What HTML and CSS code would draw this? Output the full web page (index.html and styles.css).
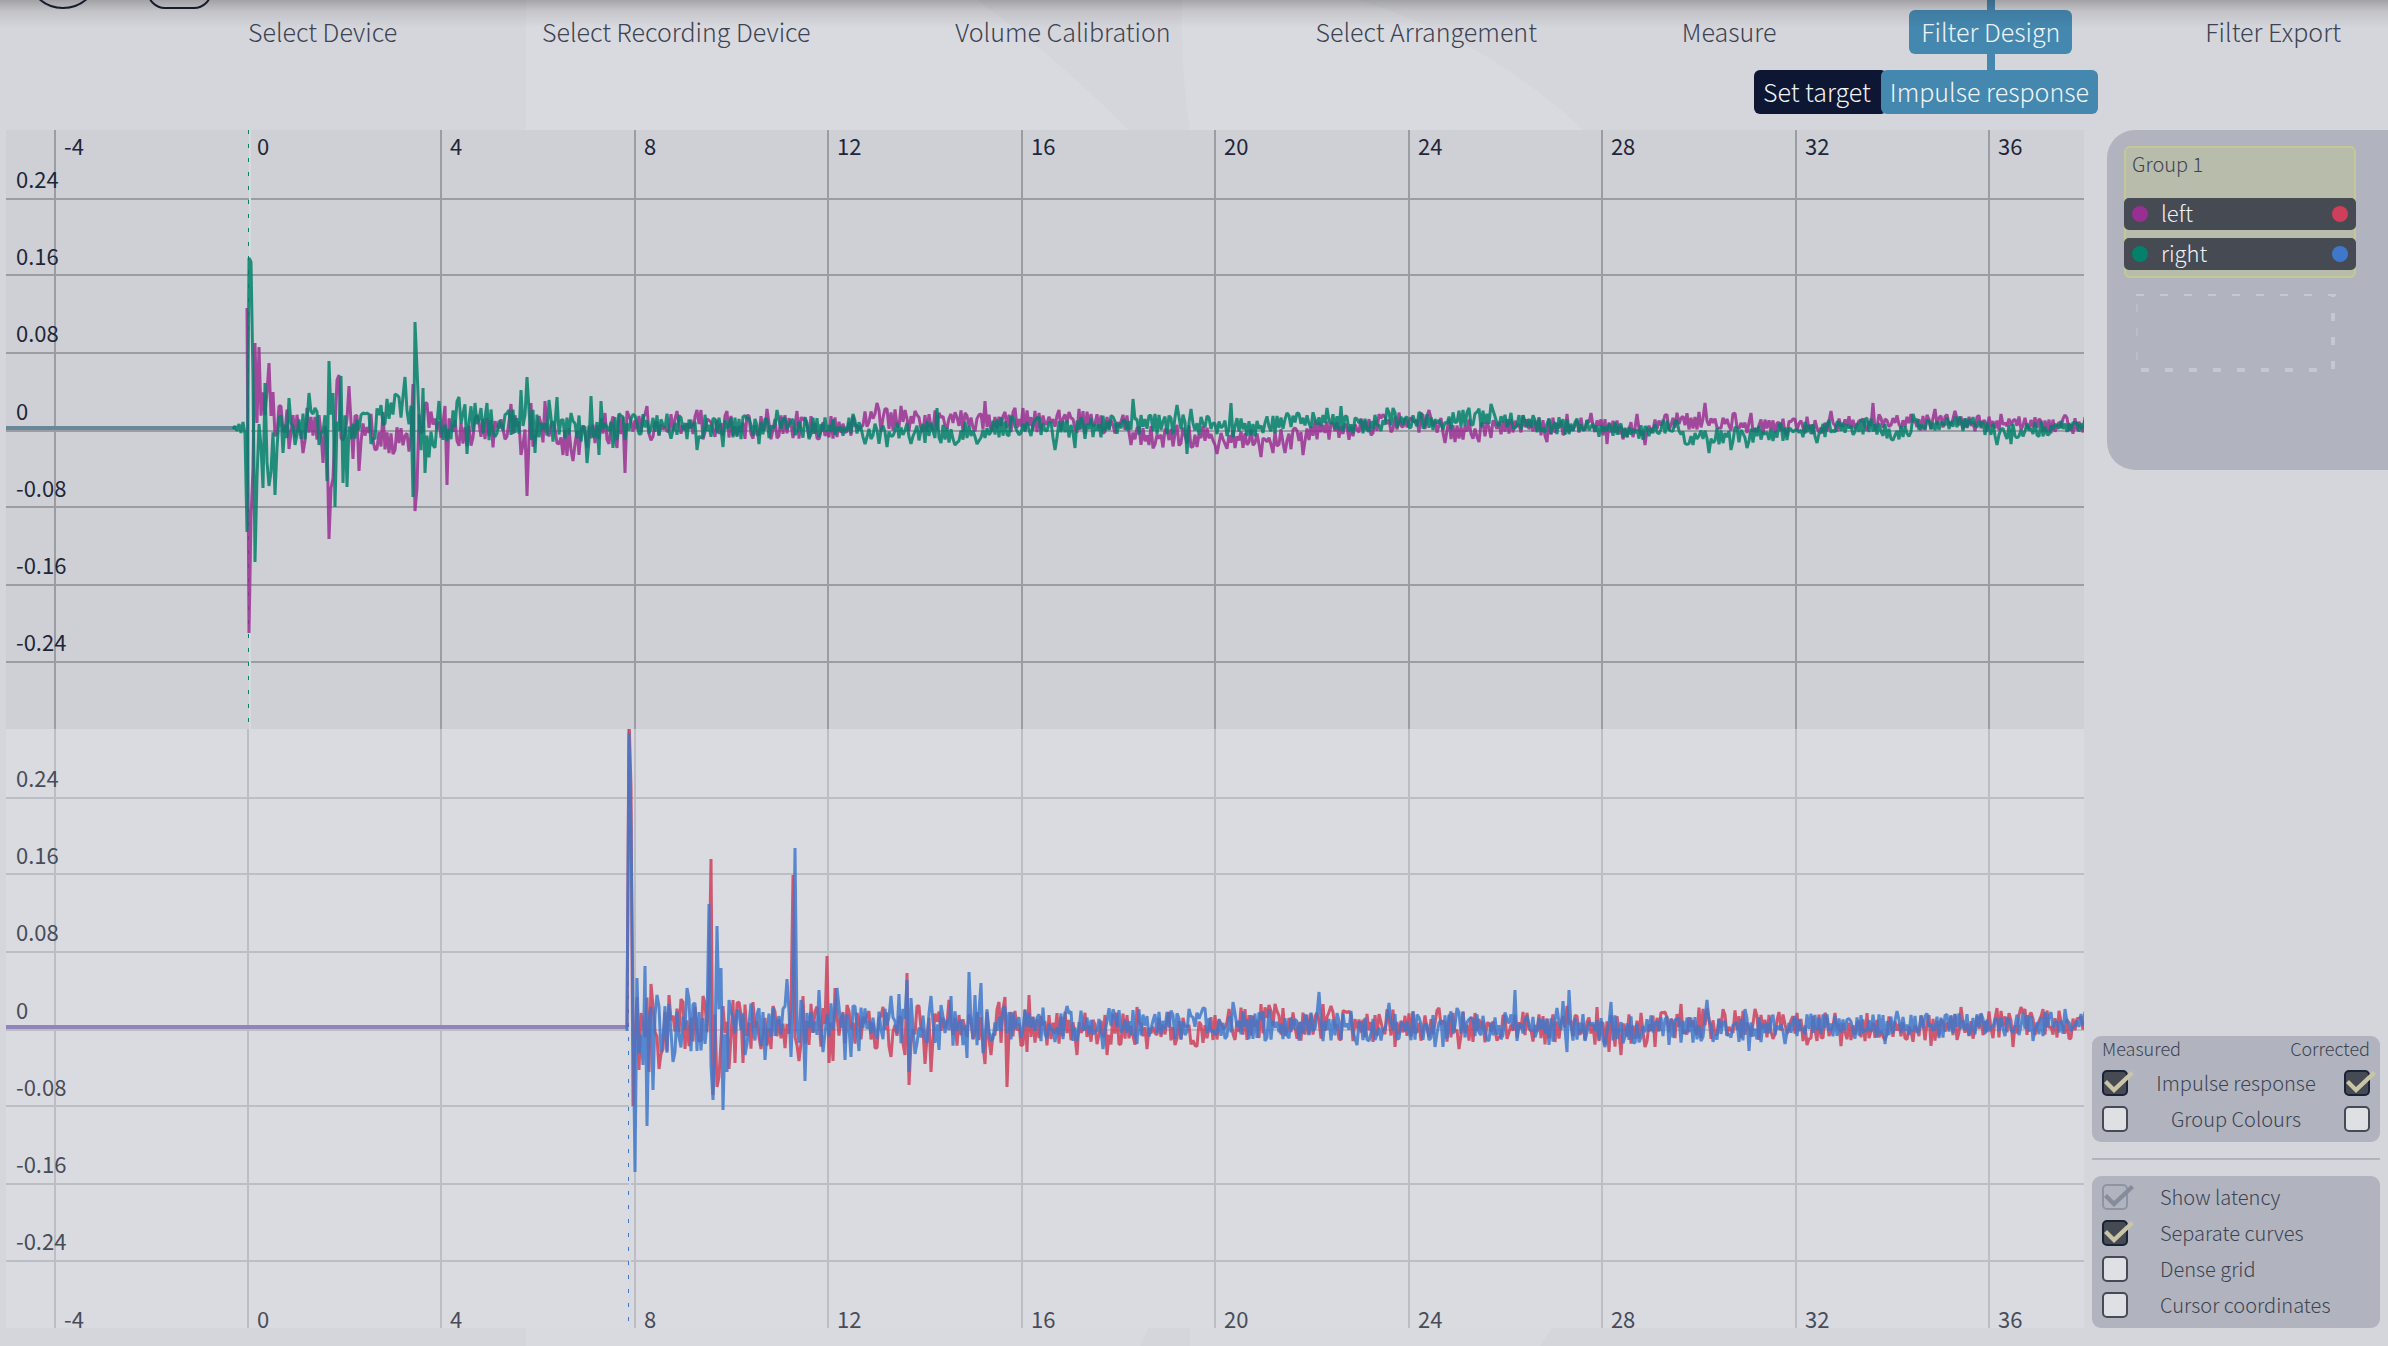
FILE: index.html
```html
<!DOCTYPE html>
<html lang="en">
<head>
<meta charset="utf-8">
<title>Filter Design – Impulse response</title>
<link rel="stylesheet" href="styles.css">
</head>
<body>
<svg class="backdrop" viewBox="0 0 2388 1346" preserveAspectRatio="none" aria-hidden="true">
  <path d="M526 0H977Q1062 62 1128 130Q1420 760 1140 1346H526Z"/>
  <path d="M1182 0Q1180 66 1190 130V1346H1540Q1960 720 1583 130Q1488 40 1358 0Z"/>
</svg>

<header class="header">
  <div class="toolbar">
    <button class="tool" type="button" aria-label="Home"><svg width="56" height="10" viewBox="0 0 56 10"><circle cx="28" cy="-28" r="36"/></svg></button>
    <button class="tool" type="button" aria-label="Menu"><svg width="66" height="10" viewBox="0 0 66 10"><rect x="1" y="-40" width="63" height="48" rx="17"/></svg></button>
  </div>
  <nav class="steps" aria-label="Steps">
    <a class="step" href="#device">Select Device</a>
    <a class="step" href="#recording">Select Recording Device</a>
    <a class="step" href="#volume">Volume Calibration</a>
    <a class="step" href="#arrangement">Select Arrangement</a>
    <a class="step" href="#measure">Measure</a>
    <a class="step step-active" href="#design" aria-current="step">Filter Design</a>
    <a class="step" href="#export">Filter Export</a>
  </nav>
  <nav class="substeps" aria-label="Filter design">
    <a class="substep" href="#target">Set target</a>
    <a class="substep substep-active" href="#impulse" aria-current="page">Impulse response</a>
  </nav>
</header>

<main class="main">
  <div class="charts">
    <section class="chart chart-measured" id="measured" aria-label="Measured impulse response"></section>
    <section class="chart chart-corrected" id="corrected" aria-label="Corrected impulse response"></section>
  </div>

  <aside class="side">
    <section class="groups">
      <div class="group">
        <h2 class="group-name">Group 1</h2>
        <ul class="channels">
          <li class="channel"><span class="dot dot-magenta"></span><span class="channel-name">left</span><span class="dot dot-red"></span></li>
          <li class="channel"><span class="dot dot-green"></span><span class="channel-name">right</span><span class="dot dot-blue"></span></li>
        </ul>
      </div>
      <svg class="dropzone" width="200" height="78" viewBox="0 0 200 78" aria-hidden="true">
        <path d="M0 1H200" stroke-width="2" stroke-dasharray="8 16"/>
        <path d="M1 10V78" stroke-width="1" stroke-dasharray="8 16"/>
        <path d="M197 0V3M197 19V78" stroke-width="4" stroke-dasharray="8 16"/>
        <path d="M5 76H190" stroke-width="4" stroke-dasharray="8 16"/>
      </svg>
    </section>

    <div class="options">
      <form class="panel">
        <div class="heads"><span>Measured</span><span>Corrected</span></div>
        <div class="pair">
          <input class="tick" type="checkbox" id="ir-measured" checked aria-label="Measured impulse response">
          <label for="ir-measured">Impulse response</label>
          <input class="tick" type="checkbox" id="ir-corrected" checked aria-label="Corrected impulse response">
        </div>
        <div class="pair">
          <input class="tick" type="checkbox" id="gc-measured" aria-label="Measured group colours">
          <label for="gc-measured">Group Colours</label>
          <input class="tick" type="checkbox" id="gc-corrected" aria-label="Corrected group colours">
        </div>
      </form>
      <hr class="rule">
      <form class="panel panel-view">
        <div class="option"><input class="tick" type="checkbox" id="latency" checked disabled><label for="latency">Show latency</label></div>
        <div class="option"><input class="tick" type="checkbox" id="separate" checked><label for="separate">Separate curves</label></div>
        <div class="option"><input class="tick" type="checkbox" id="dense"><label for="dense">Dense grid</label></div>
        <div class="option"><input class="tick" type="checkbox" id="cursor"><label for="cursor">Cursor coordinates</label></div>
      </form>
    </div>
  </aside>
</main>
<script src="charts.js"></script>
</body>
</html>
```
FILE: styles.css
```css
* { box-sizing: border-box; }

body {
  margin: 0;
  min-height: 100vh;
  display: flex;
  flex-direction: column;
  overflow-x: hidden;
  background: #d5d6db;
  color: #3c4353;
  font-family: "Noto Sans CJK SC", "Noto Sans", sans-serif;
  font-weight: 300;
  font-size: 22px;
}

a { color: inherit; text-decoration: none; }

.backdrop {
  position: absolute;
  z-index: -1;
  inset: 0;
  width: 100%;
  height: 100%;
  fill: #d9dadf;
}

/* Header */
.header { position: relative; padding-bottom: 16px; }

.header::after {
  content: "";
  position: absolute;
  z-index: 2;
  inset: 0 0 auto;
  height: 28px;
  background: linear-gradient(rgba(30, 26, 30, 0.28), rgba(30, 26, 30, 0.1) 40%, rgba(30, 26, 30, 0));
  pointer-events: none;
}

.toolbar {
  display: flex;
  gap: 56px;
  height: 10px;
  padding-left: 35px;
  overflow: hidden;
}

.tool { display: block; padding: 0; border: 0; background: none; }
.tool svg { display: block; fill: none; stroke: #141d30; stroke-width: 2; }

.steps,
.substeps {
  display: flex;
  font-size: 25px;
  line-height: 42px;
  white-space: nowrap;
}

.steps {
  justify-content: space-between;
  padding: 0 35px 0 236px;
}

.step { position: relative; padding: 0 12px 2px; border-radius: 6px; }
.step-active { background: #4487af; color: #f0f4f8; }

.step-active::before,
.step-active::after {
  content: "";
  position: absolute;
  left: calc(50% - 4px);
  width: 8px;
  background: #4487af;
}

.step-active::before { bottom: 100%; height: 10px; }
.step-active::after { top: 100%; height: 16px; }

.substeps {
  justify-content: flex-end;
  margin-top: 16px;
  padding-right: 290px;
}

.substep { padding: 0 16px 2px 9px; border-radius: 6px; background: #0d1733; color: #f0f4f8; }
.substep-active { margin-left: -6px; padding: 0 9px 2px; background: #4487af; }

/* Layout */
.main {
  flex: 1;
  display: grid;
  grid-template-columns: 1fr 296px;
  gap: 8px;
  padding: 0 0 18px 6px;
}

.charts { display: grid; grid-template-rows: 1fr 1fr; }

/* Charts */
.chart { position: relative; overflow: hidden; font-weight: 400; line-height: 24px; }
.chart-measured { background: #cfd0d5; color: #1e2639; }
.chart-corrected { background: #dadbe0; color: #474c59; }

.plot { position: absolute; inset: 0; width: 100%; height: 100%; fill: none; }
.plot path { vector-effect: non-scaling-stroke; stroke-width: 2; stroke-linejoin: bevel; }
.chart-measured .grid { stroke: #9c9da3; }
.chart-corrected .grid { stroke: #bdbec4; }
.plot .curve { stroke-width: 3; stroke-opacity: 0.85; }
.plot .halo { stroke: #d8d9de; }
.plot .marker { stroke-width: 1; stroke-dasharray: 4 10; }
.plot .silence { stroke-width: 4; }
.magenta { stroke: #992f92; }
.green { stroke: #04806b; }
.red { stroke: #cd3f5a; }
.blue { stroke: #3f78ca; }
.measured-silence { stroke: #6a869a; }
.corrected-silence { stroke: #9185bb; }

.tag { position: absolute; margin: 0; }
.tag-y { left: 10px; transform: translateY(-50%); }
.tag-x { margin-left: 9px; }
.chart-measured .tag-x { top: 3px; }
.chart-corrected .tag-x { bottom: -1px; line-height: 22px; }

/* Side column */
.side {
  display: flex;
  flex-direction: column;
  justify-content: space-between;
  gap: 24px;
}

.groups {
  min-height: 340px;
  margin-left: 15px;
  padding: 16px 32px 16px 17px;
  border-radius: 28px 0 0 28px;
  background: #b1b4be;
}

.group {
  padding: 0 0 6px;
  border: 2px solid #c5c894;
  border-radius: 6px;
  background: #b8bdab;
}

.group-name { margin: 0; padding: 2px 6px 20px; font-size: 20px; font-weight: 300; line-height: 28px; }

.channels {
  display: flex;
  flex-direction: column;
  gap: 8px;
  margin: 0 -2px;
  padding: 0;
  list-style: none;
}

.channel {
  display: flex;
  align-items: center;
  gap: 13px;
  height: 32px;
  padding: 0 8px;
  border-radius: 5px;
  background: #464a52;
  color: #f0f1f4;
}

.channel-name { flex: 1; padding-bottom: 4px; line-height: 28px; }
.dot { width: 16px; height: 16px; border-radius: 50%; }
.dot-magenta { background: #992f92; }
.dot-green { background: #04806b; }
.dot-red { background: #cd3f5a; }
.dot-blue { background: #3f78ca; }
.dropzone { display: block; margin: 16px 0 0 12px; fill: none; stroke: #c5c8d0; }

.options { padding-right: 8px; }
.panel { padding: 0 10px 5px; border-radius: 9px; background: #b1b4be; font-size: 20px; }
.panel-view { padding-top: 3px; }
.heads { display: flex; justify-content: space-between; padding-bottom: 5px; font-size: 18px; line-height: 24px; }
.pair { display: flex; align-items: center; justify-content: space-between; height: 36px; }
.option { display: flex; align-items: center; gap: 32px; height: 36px; }
.pair label,
.option label { padding-bottom: 2px; }
.rule { height: 2px; margin: 16px 0; border: 0; background: #b1b4be; }

.tick {
  appearance: none;
  position: relative;
  flex: none;
  width: 26px;
  height: 26px;
  margin: 0;
  border: 2px solid #454a56;
  border-radius: 5px;
  background: #dfe0e4;
}

.tick:checked { border-color: #1a2235; background: #464a52; }
.tick:checked::after {
  content: "";
  position: absolute;
  top: -2px;
  left: -2px;
  width: 34px;
  height: 26px;
  background: #cbc5a8;
  clip-path: path("M2 13L5 10L12 17L29 1L32 4L12 23Z");
}

.tick:disabled { border-color: #8f94a2; background: transparent; }
.tick:disabled::after { background: #868c9b; }
```
FILE: charts.js
```js
// Plot space is 2078 x 599 units; time 0 sits at ORIGIN, one millisecond is MS wide.
const WIDTH = 2078;
const HEIGHT = 599;
const ORIGIN = 242;
const MS = 48.36;
const ZERO = 298;
const ROWS = [69, 145, 223, 301, 377, 455, 532];
const LEVELS = ["0.24", "0.16", "0.08", "0", "-0.08", "-0.16", "-0.24"];
const TIMES = [-4, 0, 4, 8, 12, 16, 20, 24, 28, 32, 36];

function random(seed) {
  return () => {
    seed = (seed * 1664525 + 1013904223) >>> 0;
    return seed / 4294967296;
  };
}

function lerp(stops, x) {
  if (x <= stops[0][0]) return stops[0][1];
  for (let i = 1; i < stops.length; i++) {
    const [x0, y0] = stops[i - 1];
    const [x1, y1] = stops[i];
    if (x <= x1) return y0 + (y1 - y0) * (x - x0) / (x1 - x0);
  }
  return stops[stops.length - 1][1];
}

// A reverberant tail (noise swinging round a drifting mean) with the strong reflections laid over it.
function trace({ start, seed, amp, mean, peaks }) {
  const next = random(seed);
  const samples = new Map();
  let side = 1;
  for (let x = start; x <= WIDTH + 6; x += 2) {
    if (next() < 0.75) side = -side;
    samples.set(x, lerp(mean, x) + side * (0.1 + 1.25 * next()) * lerp(amp, x));
  }
  for (let i = 0; i < peaks.length; i += 2) {
    const x = start + 2 * Math.round((peaks[i] - 6 - start) / 2);
    samples.set(x, peaks[i + 1]);
  }
  return "M" + [...samples].sort((a, b) => a[0] - b[0])
    .map(([x, v]) => x + " " + (ZERO - v).toFixed(1)).join("L");
}

const magenta = {
  start: 241, seed: 11,
  amp: [[241, 3], [250, 16], [400, 13], [620, 11], [720, 9], [1100, 9], [1300, 8], [2078, 6]],
  mean: [[241, 0], [252, 30], [266, 15], [280, 0], [360, 0], [385, -15], [400, -10], [420, 12], [440, -2], [540, -4], [566, -17], [580, -6], [620, 0],
    [840, 1], [860, 8], [1090, 6], [1120, 2], [1140, -9], [1200, -8], [1260, -13], [1290, -10], [1310, -2], [1350, -1], [1384, 6], [1420, 5], [1450, -2], [1480, -1],
    [1500, 3], [1590, 1], [1630, -3], [1660, 7], [1720, 8], [1750, 0], [1830, 4], [1880, 7], [1990, 4], [2078, 2]],
  peaks: [247, 120, 249, -205, 251, -90, 253, -40, 255, 85, 257, 5, 259, 81, 268, 65, 272, 36, 279, 22, 288, -21, 302, -25, 323, -35, 329, -111, 331, -60, 333, -50, 336, 48,
    339, 53, 348, 42, 352, -31, 359, -43, 374, -22, 383, 16, 395, -22, 412, 44, 414, -83, 417, -60, 427, 25, 445, 22, 447, -57, 510, 24, 521, -27,
    527, -68, 531, 25, 545, 27, 562, -27, 573, -33, 605, 15, 617, -20, 625, -45, 627, 17, 646, 22, 677, 17, 697, 18, 701, 18, 727, 17, 767, 19, 797, 17,
    877, 25, 901, 22, 985, 27, 1015, 20, 1023, 20, 1078, 19, 1131, -17, 1149, -17, 1180, -15, 1216, -26, 1235, -20, 1261, -29, 1272, -25, 1284, -25,
    1302, -27, 1428, 18, 1445, -15, 1455, -14, 1479, -14, 1547, -14, 1567, 14, 1591, 15, 1606, -16, 1636, 14, 1645, -17, 1664, 13, 1705, 25,
    1751, 15, 1831, 17, 1873, 25, 1934, 19, 1955, 17, 2000, 14, 2064, 13]
};

const green = {
  start: 227, seed: 29,
  amp: [[227, 2], [241, 7], [250, 22], [280, 13], [400, 13], [560, 13], [640, 10], [720, 9], [1200, 8], [1400, 7], [2078, 6]],
  mean: [[227, 0], [244, 0], [250, -20], [268, -25], [276, 0], [366, 0], [386, 25], [404, 10], [420, -14], [434, -5], [450, 10], [490, 4], [640, 2],
    [840, 0], [860, -5], [980, -4], [1000, 3], [1080, 0], [1120, 3], [1170, 4], [1250, -1], [1275, 6], [1310, 7], [1360, 0], [1384, 10],
    [1440, 5], [1465, 11], [1520, 5], [1570, 1], [1640, -4], [1670, 3], [1680, -10], [1720, -8], [1780, -4], [1860, 2], [1890, -5], [1910, 2], [1970, 5], [1990, -5], [2020, -2], [2078, 3]],
  peaks: [233, -1, 235, 2, 237, -3, 239, 4, 241, -5, 243, 6, 245, -6, 247, -104, 249, 170, 251, 166, 253, 50, 255, -134, 257, -50, 262, -60, 265, 45, 268, -58, 274, -67, 282, -25, 289, 30, 309, 35,
    315, 20, 326, -53, 328, 67, 332, 35, 334, -79, 340, 52, 343, -55, 346, -59, 362, 15, 397, 33, 405, 51, 412, -69, 414, 106, 417, 60,
    422, 40, 425, -45, 439, 27, 458, 31, 466, -26, 475, 25, 487, 25, 521, 38, 527, 51, 535, -25, 549, 28, 557, 31, 571, 15, 587, -35, 590, 32,
    599, -27, 601, 27, 612, -20, 697, -22, 722, -19, 758, -16, 776, 18, 852, 14, 864, -16, 886, -19, 937, 20, 955, -17, 977, -16, 1055, -22, 1074, -20,
    1133, 29, 1155, 14, 1177, 23, 1186, -26, 1190, 19, 1231, 25, 1287, 15, 1327, 20, 1341, 22, 1387, 20, 1393, 20, 1468, 20, 1491, 24,
    1692, -17, 1708, -25, 1730, -22, 1747, -20, 1817, -15, 1913, 14, 1997, -17, 2010, -16]
};

const red = {
  start: 621, seed: 47,
  amp: [[621, 1], [624, 22], [780, 17], [1000, 15], [1100, 13], [1560, 12], [2078, 10]],
  mean: [[621, 0], [680, 2], [900, 0], [1100, 0], [1195, -6], [1220, 3], [1500, 0], [1608, -4], [1690, 4], [1780, 0], [1960, -1], [2020, 6], [2078, 0]],
  peaks: [627, 0, 629, 310, 631, 240, 633, -79, 637, 30, 639, -43, 649, -45, 651, 43, 658, -42, 668, 32, 682, 25, 684, -22, 703, 31, 709, 40, 711, 168, 713, -68, 717, -60, 719, -50,
    729, -42, 733, 27, 735, -36, 739, 25, 742, -36, 753, 25, 761, -22, 773, 21, 793, 152, 795, -10, 798, -34, 803, 31, 827, 71, 829, -36, 832, -34,
    835, 39, 847, 22, 890, -30, 904, -28, 906, 54, 909, -58, 919, 21, 925, -37, 930, -45, 949, 27, 985, -37, 991, -28, 998, 25, 1005, 30, 1007, -60,
    1011, 15, 1026, -25, 1028, 32, 1077, -28, 1107, -28, 1136, 20, 1147, -22, 1169, 15, 1175, -18, 1261, 23, 1268, 22, 1275, 23, 1323, 23, 1331, 21,
    1395, -20, 1438, 19, 1458, -22, 1567, 21, 1597, 20, 1608, -25, 1621, -28, 1644, -20, 1654, -20, 1664, 15, 1681, 23, 1755, 18, 1807, -18,
    1835, 14, 1841, -19, 1931, -19, 1961, 20, 1996, 19, 2013, -20, 2020, 20, 2024, 18]
};

const blue = {
  start: 621, seed: 83,
  amp: [[621, 1], [624, 22], [780, 16], [1000, 14], [1100, 12], [1560, 11], [2078, 9]],
  mean: [[621, 0], [680, 0], [900, 4], [930, 0], [1180, 4], [1240, 2], [1500, 0], [1740, -4], [1780, 0], [2000, 2], [2078, 4]],
  peaks: [627, -4, 629, 294, 631, 200, 633, 12, 635, -145, 637, 49, 643, -38, 645, 61, 647, -99, 651, 20, 653, -63, 657, 32, 661, -25, 669, 23, 673, -35, 686, 39, 689, 28,
    695, 24, 697, -24, 709, 123, 711, -39, 713, -73, 716, 101, 721, 59, 723, -83, 727, -45, 729, 27, 737, 17, 745, -28, 765, -33, 786, 48, 791, -30,
    795, 179, 797, 0, 800, 27, 805, -54, 807, 14, 819, 37, 822, -25, 836, 39, 844, -33, 850, -30, 853, 21, 859, -24, 890, 31, 899, 33, 907, 47, 909, -45,
    911, 29, 914, -27, 930, 31, 939, -23, 941, 22, 951, 31, 967, -31, 969, 55, 975, 32, 981, 44, 983, -26, 1067, 21, 1103, -22, 1137, -17, 1203, 19,
    1232, 25, 1265, -14, 1318, 35, 1356, -18, 1388, 24, 1435, -20, 1442, -20, 1457, 19, 1514, 37, 1549, -18, 1557, 19, 1562, 26, 1566, -25,
    1568, 37, 1605, -20, 1611, 25, 1669, -18, 1707, 27, 1744, 18, 1748, -24, 1784, -17, 1885, -17, 1897, 16, 2032, -14, 2065, 18]
};

function draw(id, { curves, marker, markerClass, silence, silenceEnd }) {
  const chart = document.getElementById(id);
  const columns = TIMES.map(t => Math.round(ORIGIN + t * MS));
  const grid = columns.filter(x => Math.abs(x - marker) > 2).map(x => `M${x} 0V${HEIGHT}`)
    .concat(ROWS.map(y => `M0 ${y}H${WIDTH}`)).join("");
  const lines = curves.map(([name, data]) => `<path class="${name} curve" d="${trace(data)}"/>`).join("");
  const tagsY = LEVELS.map((text, i) =>
    `<p class="tag tag-y" style="top:${(100 * (48 + i * 77.2) / HEIGHT).toFixed(2)}%">${text}</p>`).join("");
  const tagsX = TIMES.map((t, i) =>
    `<p class="tag tag-x" style="left:${(100 * columns[i] / WIDTH).toFixed(2)}%">${t}</p>`).join("");
  chart.innerHTML = `<svg class="plot" viewBox="0 0 ${WIDTH} ${HEIGHT}" preserveAspectRatio="none" aria-hidden="true">
    <path class="grid" d="${grid}"/>
    <path class="halo" d="M${marker + 1} 0V${HEIGHT}"/>
    <path class="${silence} silence" d="M0 ${ZERO}H${silenceEnd}"/>
    <path class="${markerClass} marker" d="M${marker - 0.5} 0V${HEIGHT}"/>
    ${lines}
  </svg>${tagsY}${tagsX}`;
}

draw("measured", {
  curves: [["magenta", magenta], ["green", green]],
  marker: 243, markerClass: "green", silence: "measured-silence", silenceEnd: 230
});
draw("corrected", {
  curves: [["red", red], ["blue", blue]],
  marker: 623, markerClass: "blue", silence: "corrected-silence", silenceEnd: 622
});
```
